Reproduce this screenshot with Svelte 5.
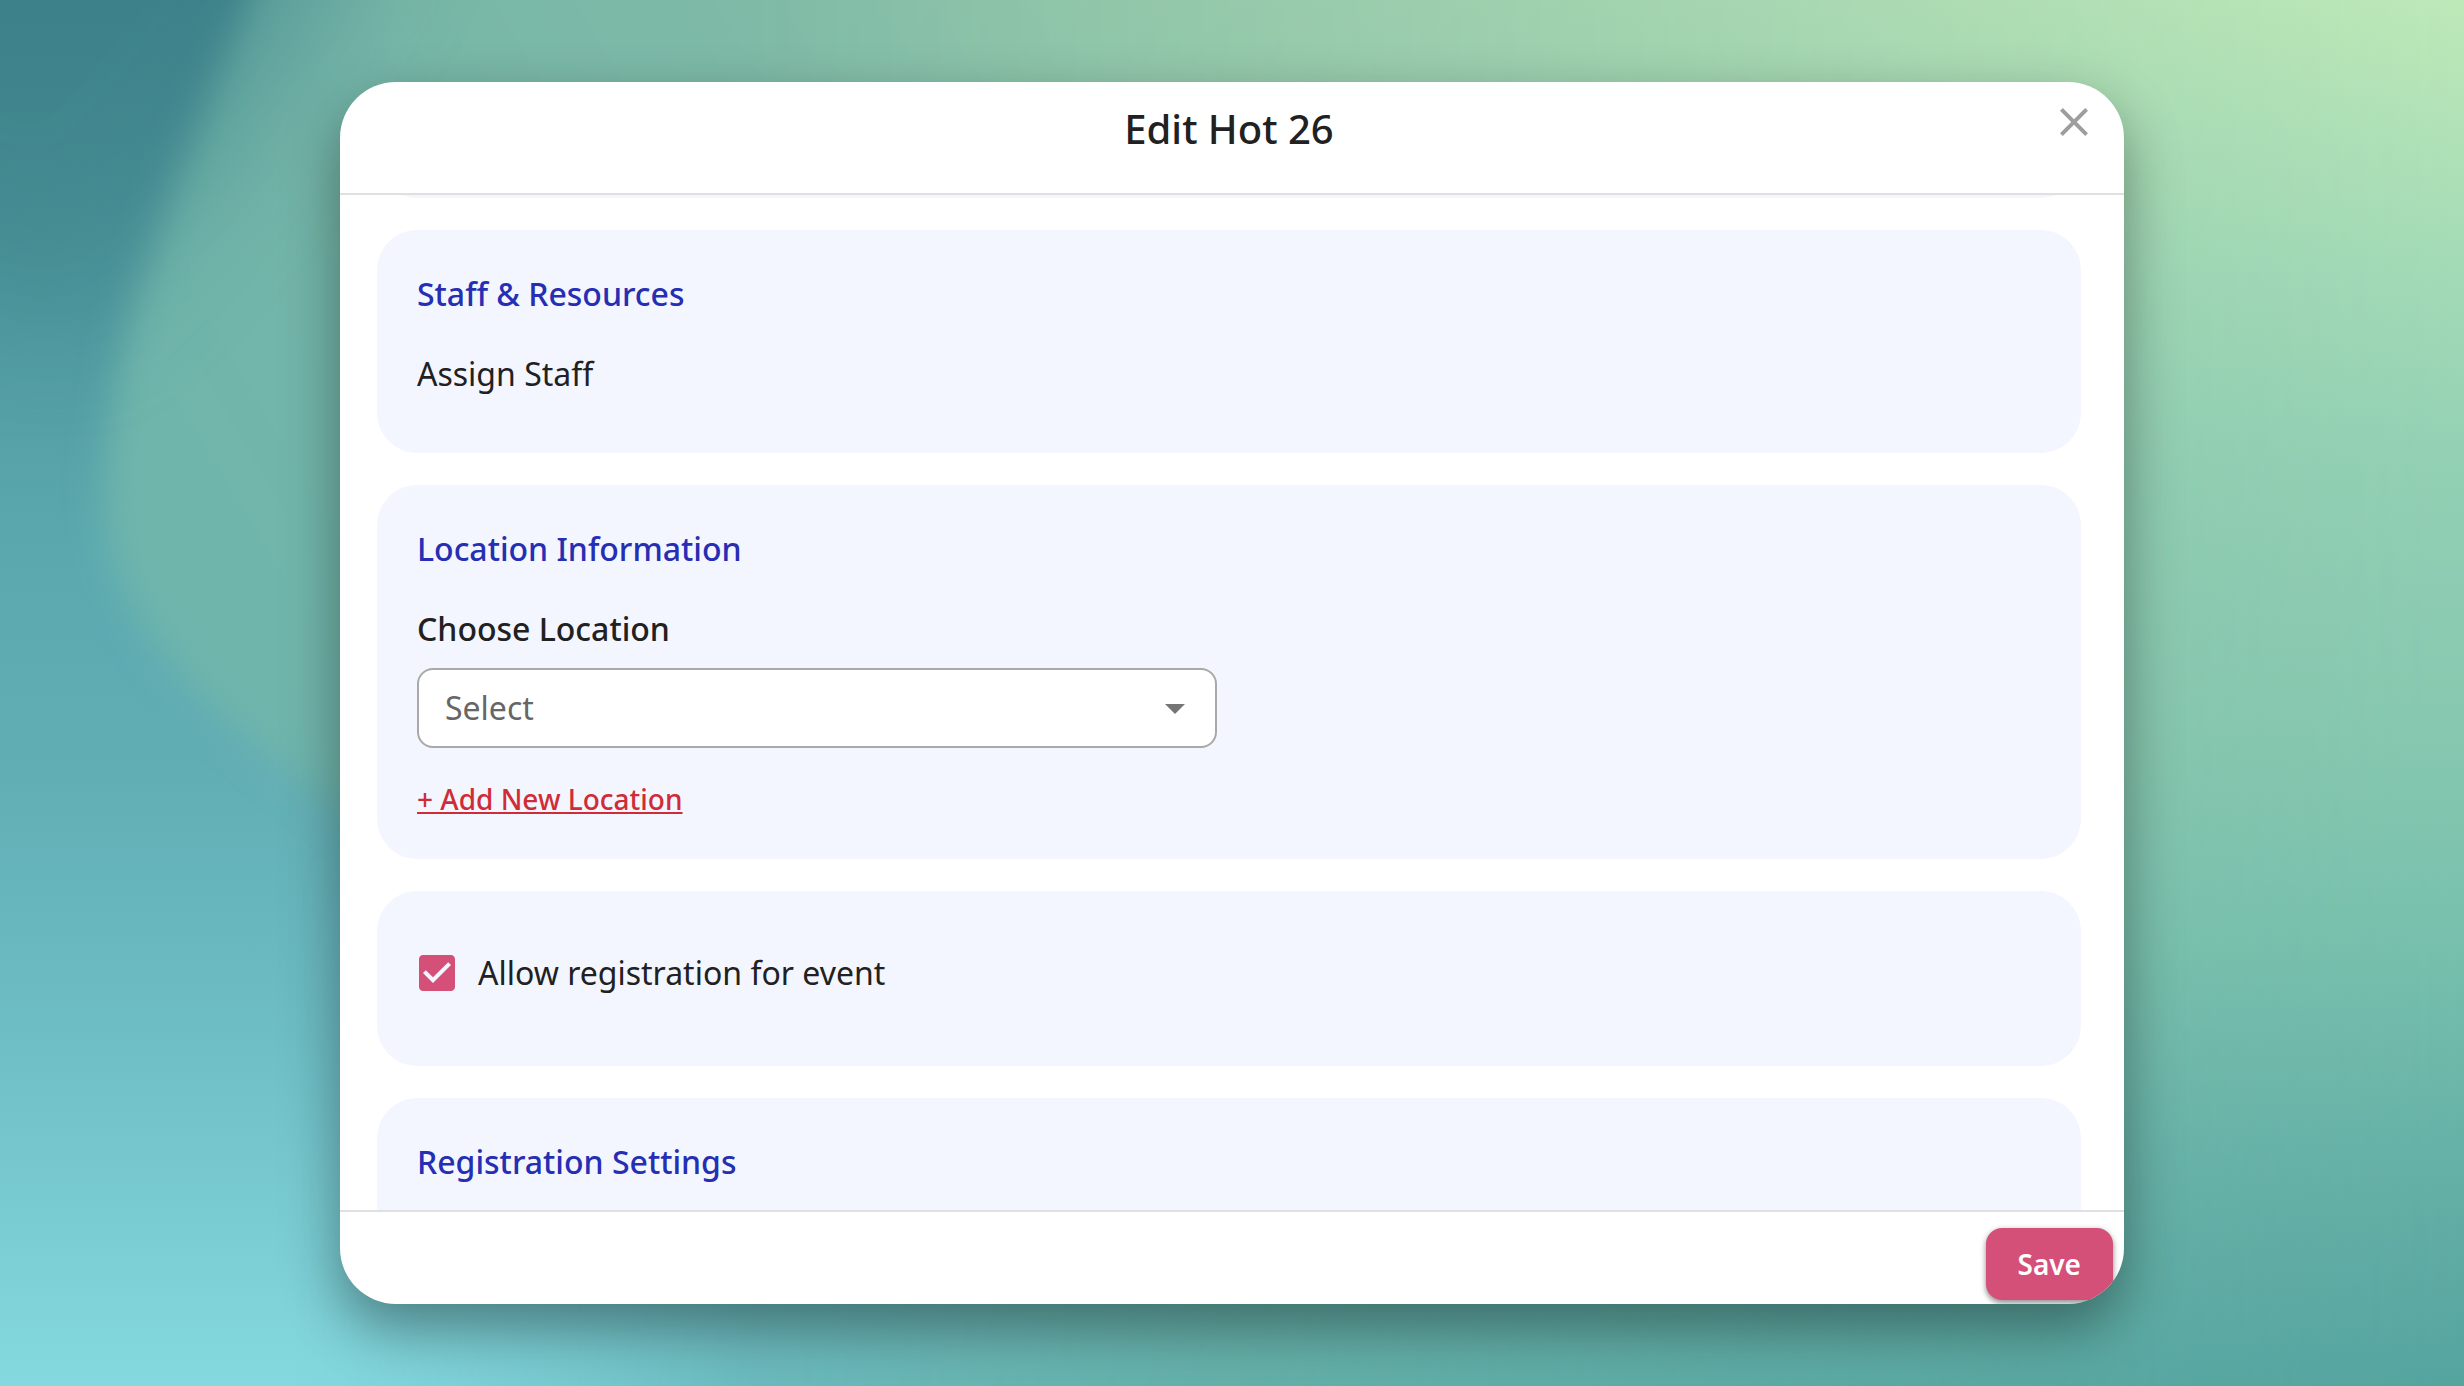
<script lang="ts">
	import { onMount } from 'svelte'

	let content: HTMLElement
	let location = $state('')
	let allowRegistration = $state(true)

	// open the form at the staff section
	onMount(() => {
		content.scrollTop = 220
	})
</script>

<main class="backdrop">
	<svg class="wallpaper" viewBox="0 0 2464 1386" preserveAspectRatio="none" aria-hidden="true">
		<defs>
			<linearGradient id="sea" x2="0" y2="1">
				<stop offset="0" stop-color="#3e828a" />
				<stop offset="0.2" stop-color="#4e979d" />
				<stop offset="0.4" stop-color="#5ba9af" />
				<stop offset="0.56" stop-color="#62aeb5" />
				<stop offset="0.74" stop-color="#6dbdc4" />
				<stop offset="1" stop-color="#84d9df" />
			</linearGradient>
			<linearGradient id="hill" gradientUnits="userSpaceOnUse" x1="100" x2="1100" y1="600" y2="0">
				<stop offset="0" stop-color="#6eb5ad" />
				<stop offset="0.35" stop-color="#74b5a8" />
				<stop offset="1" stop-color="#86bda6" />
			</linearGradient>
			<linearGradient id="shore">
				<stop offset="0.12" stop-color="#74c8ce" stop-opacity="0" />
				<stop offset="0.3" stop-color="#6cbbbf" />
				<stop offset="0.5" stop-color="#6bb5ae" />
				<stop offset="1" stop-color="#68b2aa" />
			</linearGradient>
			<linearGradient id="meadow" x2="0" y2="1">
				<stop offset="0" stop-color="#bee9b8" />
				<stop offset="0.2" stop-color="#a2dab6" />
				<stop offset="0.34" stop-color="#92d0b4" />
				<stop offset="0.52" stop-color="#87c8b0" />
				<stop offset="0.68" stop-color="#77c0ad" />
				<stop offset="0.84" stop-color="#65b0a7" />
				<stop offset="1" stop-color="#55a49f" />
			</linearGradient>
			<linearGradient id="fade-right">
				<stop offset="0.3" stop-color="#000" />
				<stop offset="1" stop-color="#fff" />
			</linearGradient>
			<linearGradient id="fade-down" x2="0" y2="1">
				<stop offset="0.6" stop-color="#000" />
				<stop offset="0.94" stop-color="#fff" />
			</linearGradient>
			<mask id="right-side">
				<rect width="2464" height="1386" fill="url(#fade-right)" />
			</mask>
			<mask id="bottom-side">
				<rect width="2464" height="1386" fill="url(#fade-down)" />
			</mask>
			<filter id="soft" x="-10%" y="-10%" width="120%" height="120%">
				<feGaussianBlur stdDeviation="18" />
			</filter>
			<filter id="softer" x="-20%" y="-20%" width="140%" height="140%">
				<feGaussianBlur stdDeviation="60" />
			</filter>
		</defs>
		<rect width="2464" height="1386" fill="url(#sea)" />
		<path d="M320-200C250 40 105 260 105 500c0 130 120 225 240 315 250 190 500 350 700 700h1700V-200z" fill="url(#hill)" filter="url(#soft)" />
		<path d="M400-200C380 0 210 180 60 330L-150 200V-200z" fill="#3e828a" opacity="0.5" filter="url(#softer)" />
		<rect width="2464" height="1386" fill="url(#shore)" mask="url(#bottom-side)" />
		<rect width="2464" height="1386" fill="url(#meadow)" mask="url(#right-side)" />
	</svg>

	<div class="modal" role="dialog" aria-labelledby="dialog-title">
		<header>
			<h1 id="dialog-title">Edit Hot 26</h1>
			<button class="close" type="button" aria-label="Close">
				<svg viewBox="0 0 24 24"><path d="M19 6.41 17.59 5 12 10.59 6.41 5 5 6.41 10.59 12 5 17.59 6.41 19 12 13.41 17.59 19 19 17.59 13.41 12z" /></svg>
			</button>
		</header>

		<div class="content" bind:this={content}>
			<section class="card previous"></section>

			<section class="card">
				<h2>Staff &amp; Resources</h2>
				<p class="staff">Assign Staff</p>
			</section>

			<section class="card">
				<h2>Location Information</h2>
				<label class="field-label" for="location">Choose Location</label>
				<div class="select">
					<select id="location" bind:value={location}>
						<option value="">Select</option>
					</select>
					<svg viewBox="0 0 24 24"><path d="m7 10 5 5 5-5z" /></svg>
				</div>
				<a class="add" href="#location">+ Add New Location</a>
			</section>

			<section class="card">
				<div class="check-row">
					<span class="checkbox">
						<input id="allow" type="checkbox" bind:checked={allowRegistration} />
						<svg viewBox="0 0 24 24">
							{#if allowRegistration}
								<path d="M19 3H5c-1.11 0-2 .9-2 2v14c0 1.1.89 2 2 2h14c1.11 0 2-.9 2-2V5c0-1.1-.89-2-2-2zm-9 14-5-5 1.41-1.41L10 14.17l7.59-7.59L19 8z" />
							{:else}
								<path d="M19 5v14H5V5zm0-2H5c-1.1 0-2 .9-2 2v14c0 1.1.9 2 2 2h14c1.1 0 2-.9 2-2V5c0-1.1-.9-2-2-2" />
							{/if}
						</svg>
					</span>
					<label for="allow">Allow registration for event</label>
				</div>
			</section>

			<section class="card settings">
				<h2>Registration Settings</h2>
			</section>
		</div>

		<footer>
			<button class="save" type="button">Save</button>
		</footer>
	</div>
</main>

<style>
	:global(body) {
		margin: 0;
	}

	.backdrop {
		position: relative;
		box-sizing: border-box;
		display: flex;
		height: 100vh;
		padding: 82px 340px;
		font-family: "Noto Sans", sans-serif;
		font-size: 32px;
		line-height: 48px;
		color: #212121;
	}

	.wallpaper {
		position: absolute;
		inset: 0;
		width: 100%;
		height: 100%;
	}

	.modal {
		position: relative;
		display: flex;
		flex: 1;
		flex-direction: column;
		min-width: 0;
		overflow: hidden;
		border-radius: 56px;
		background: #fff;
		box-shadow: 0 24px 56px rgba(0, 0, 0, 0.38);
	}

	header {
		position: relative;
		padding: 19px 6px 36px 0;
		border-bottom: 2px solid #e0e0e0;
	}

	h1 {
		margin: 0;
		font-size: 40px;
		font-weight: 500;
		line-height: 56px;
		text-align: center;
	}

	.close {
		position: absolute;
		top: 16px;
		right: 26px;
		width: 48px;
		height: 48px;
		padding: 0;
		border: 0;
		background: none;
		cursor: pointer;
	}

	.close svg {
		display: block;
		fill: #9e9e9e;
	}

	.content {
		display: flex;
		flex: 1;
		flex-direction: column;
		gap: 32px;
		min-height: 0;
		padding: 0 43px 0 37px;
		overflow-y: auto;
		scrollbar-width: none;
	}

	.card {
		flex-shrink: 0;
		padding: 40px;
		border-radius: 40px;
		background: #f3f6ff;
	}

	.previous {
		height: 143px;
	}

	.settings {
		min-height: 240px;
	}

	h2 {
		margin: 0 0 32px;
		font-size: 32px;
		font-weight: 500;
		line-height: 48px;
		color: #262eb3;
	}

	.staff {
		margin: 0 0 15px;
	}

	.field-label {
		display: block;
		margin-bottom: 15px;
		font-weight: 500;
	}

	.select {
		position: relative;
		max-width: 800px;
		margin-bottom: 31px;
	}

	select {
		display: block;
		box-sizing: border-box;
		width: 100%;
		height: 80px;
		padding: 0 80px 0 26px;
		border: 2px solid #a9a9a9;
		border-radius: 16px;
		appearance: none;
		background: #fff;
		font: inherit;
		color: #666;
	}

	.select svg {
		position: absolute;
		top: 16px;
		right: 18px;
		width: 48px;
		fill: #757575;
		pointer-events: none;
	}

	.add {
		display: block;
		width: fit-content;
		font-size: 28px;
		font-weight: 500;
		line-height: 40px;
		color: #d02c37;
	}

	.check-row {
		display: flex;
		align-items: center;
		gap: 17px;
		height: 84px;
		margin: 0 0 11px -4px;
	}

	.checkbox {
		position: relative;
		width: 48px;
		height: 48px;
	}

	.checkbox input {
		position: absolute;
		inset: 0;
		width: 100%;
		height: 100%;
		margin: 0;
		opacity: 0;
		cursor: pointer;
	}

	.checkbox svg {
		display: block;
		fill: #d55078;
	}

	footer {
		display: flex;
		justify-content: flex-end;
		padding: 16px 11px 4px;
		border-top: 2px solid #e0e0e0;
	}

	.save {
		height: 72px;
		padding: 0 32px;
		border: 0;
		border-radius: 16px;
		background: #d55078;
		box-shadow: 0 2px 6px rgba(0, 0, 0, 0.35), 0 4px 4px rgba(0, 0, 0, 0.15);
		font: inherit;
		font-size: 28px;
		font-weight: 600;
		color: #fff;
		cursor: pointer;
	}
</style>
